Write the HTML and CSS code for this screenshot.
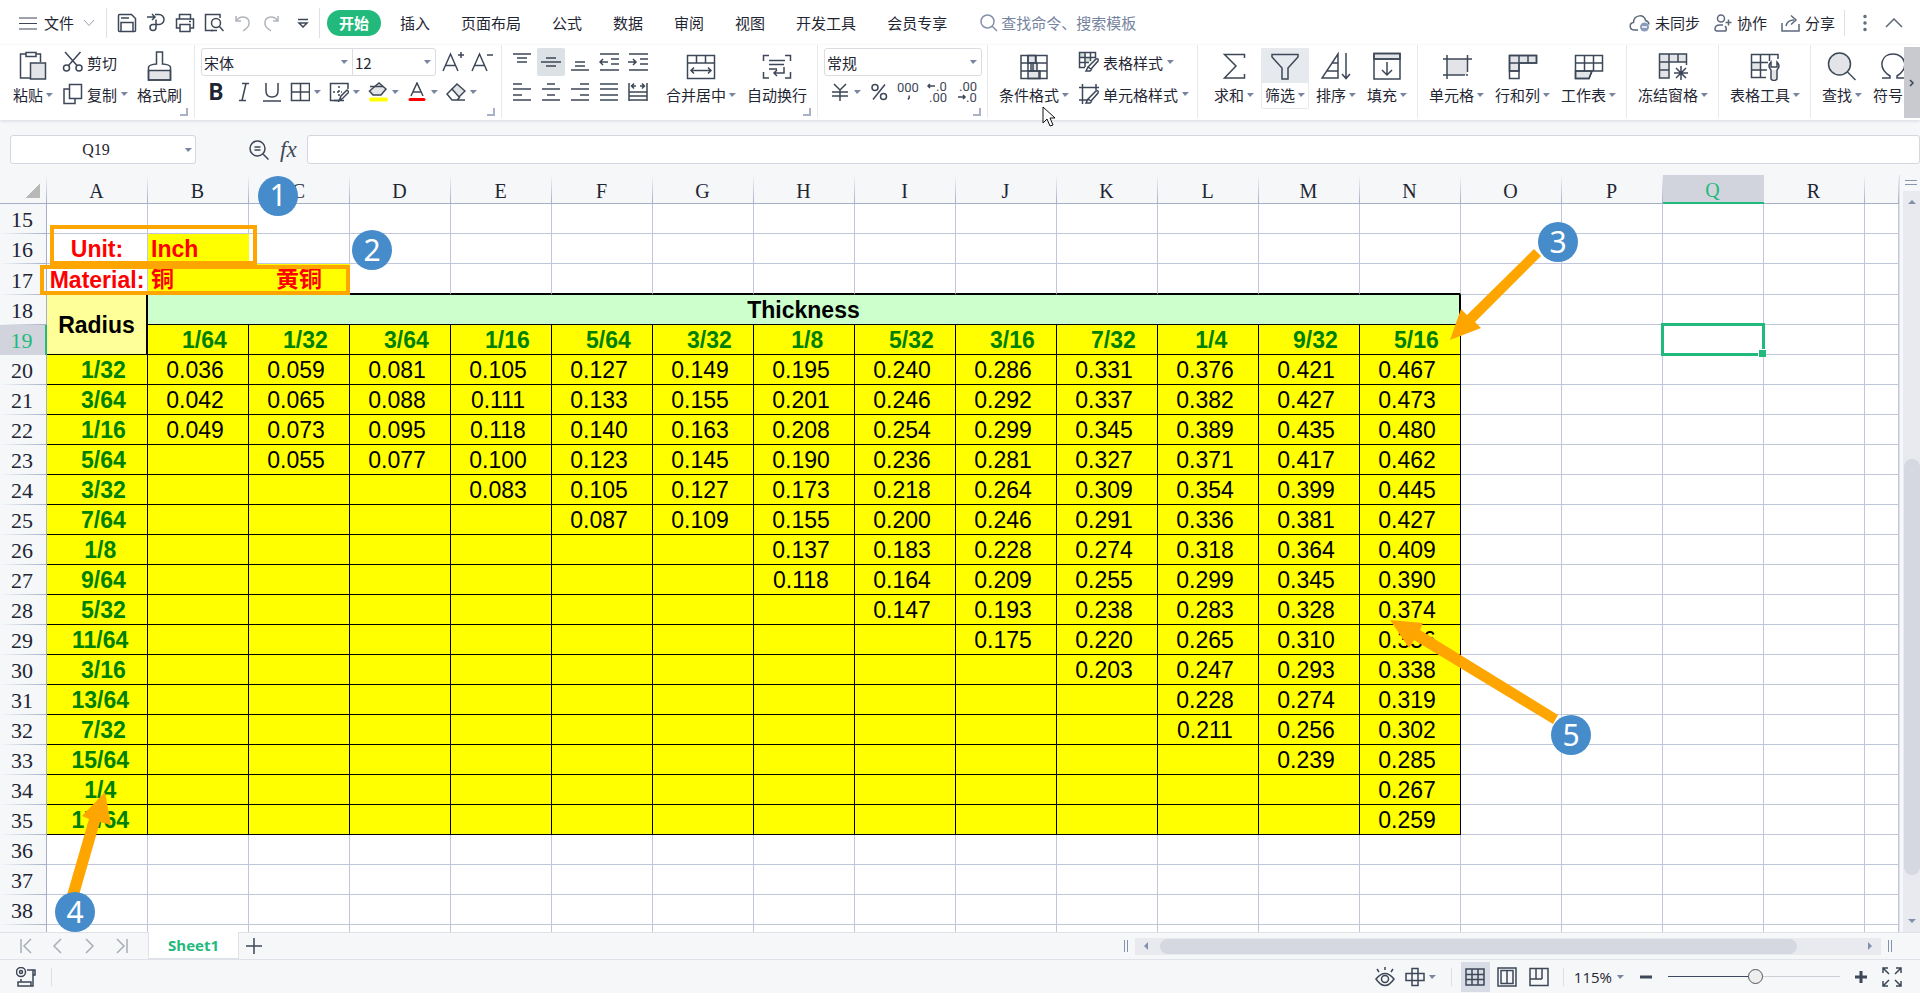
FILE: index.html
```html
<!DOCTYPE html>
<html lang="zh-CN">
<head>
<meta charset="utf-8">
<title>Sheet1</title>
<link rel="stylesheet" href="styles.css">
</head>
<body>
<div class="app">
  <header class="menubar">
    <button class="file-menu">
      <svg width="18" height="14" viewBox="0 0 18 14"><path d="M0 2h18M0 7.500h18M0 13h18"/></svg>
      <span>文件</span>
      <svg class="muted" width="12" height="8" viewBox="0 0 12 8"><path d="M1 1l5 5.500L11 1"/></svg>
    </button>
    <div class="quick">
      <button aria-label="保存"><svg width="20" height="20" viewBox="0 0 20 20"><path d="M1.500 2.500q0-1 1-1h12l4 4v12q0 1-1 1h-15q-1 0-1-1zM4 18V9.500h12V18M4 5h8"/></svg></button>
      <button aria-label="输出"><svg width="20" height="20" viewBox="0 0 20 20"><path d="M1 4h8M6 1l3 3-3 3M9 1.500h4a5 5 0 0 1 0 10H7a3 3 0 1 0 3 3v-8"/></svg></button>
      <button aria-label="打印"><svg width="20" height="20" viewBox="0 0 20 20"><path d="M4.500 6V1.500h11V6M5 15H1.500V6h17v9H15M5 11.500h10v7H5zM14 8.500h2"/></svg></button>
      <button aria-label="打印预览"><svg width="20" height="20" viewBox="0 0 20 20"><path d="M16 5V1.500H1.500v16H9"/><circle cx="12" cy="10" r="4.500"/><path d="M15.500 13.500l4 4.500M7 17.500h6"/></svg></button>
      <button class="off" aria-label="撤销"><svg width="20" height="20" viewBox="0 0 20 20"><path d="M3 3v5h5M3 8C8 1 17 4 16 11c0 3-3 5-6 7"/></svg></button>
      <button class="off" aria-label="恢复"><svg width="20" height="20" viewBox="0 0 20 20"><path d="M16 3v5h-5M16 8C11 1 2 4 3 11c0 3 3 5 6 7"/></svg></button>
      <button class="more" aria-label="更多"><svg width="12" height="10" viewBox="0 0 12 10"><path d="M1 1.500h10M2 5l4 4 4-4z"/></svg></button>
    </div>
    <nav class="tabs">
      <button class="on">开始</button>
      <button>插入</button><button>页面布局</button><button>公式</button><button>数据</button><button>审阅</button><button>视图</button><button>开发工具</button><button>会员专享</button>
    </nav>
    <label class="search">
      <svg width="18" height="18" viewBox="0 0 18 18"><circle cx="7.500" cy="7.500" r="6.500"/><path d="M12 12l5 5"/></svg>
      <input type="text" placeholder="查找命令、搜索模板">
    </label>
    <div class="account">
      <button><svg width="21" height="18" viewBox="0 0 21 18"><path d="M9 16H5C0 15.500 0 9 4.500 8.500 5 0 16 0 16.500 6.500q3 .5 3.500 4"/><circle class="badge" cx="15.500" cy="13" r="4.500"/><path class="white" d="M13 13h5"/></svg>未同步</button>
      <button><svg width="18" height="18" viewBox="0 0 18 18"><circle cx="7" cy="4.500" r="3.500"/><path d="M12 17H3q-2 0-2-2 0-4 5-4h3M14.500 5.500v6M11.500 8.500h6M11 12q2 2 1 5"/></svg>协作</button>
      <button><svg width="19" height="18" viewBox="0 0 19 18"><path d="M1 9v8h17v-7M5 12c1-5 4-6 8-6M10 1.500l5 4.500-5 4.500"/></svg>分享</button>
      <button class="dots" aria-label="更多选项"><svg width="4" height="18" viewBox="0 0 4 18"><circle cx="2" cy="2.500" r="1"/><circle cx="2" cy="9" r="1"/><circle cx="2" cy="15.500" r="1"/></svg></button>
      <button aria-label="折叠功能区"><svg width="18" height="10" viewBox="0 0 18 10"><path d="M1 9l8-8 8 8"/></svg></button>
    </div>
  </header>

  <div class="ribbon">
    <div class="groups">
      <section class="group g-clip launcher">
        <button class="tool"><svg width="30" height="30" viewBox="0 0 30 30"><path d="M12 27H2.500V3H8M18 3h4.500v8M8 1.500h10v4H8z"/><path class="fill" d="M12.500 12h15v16h-15z"/></svg><span>粘贴<i></i></span></button>
        <div class="stack">
          <button><svg width="22" height="22" viewBox="0 0 22 22"><circle cx="4.500" cy="17" r="3"/><circle cx="17" cy="17" r="3"/><path d="M3 1l12 13.500M18.500 1L6.500 14.500"/></svg><span>剪切</span></button>
          <button><svg width="22" height="22" viewBox="0 0 22 22"><path d="M7 6H2v14.500h11V16M7.500 1.500h12v14h-12z"/></svg><span>复制<i></i></span></button>
        </div>
        <button class="tool"><svg width="30" height="30" viewBox="0 0 30 30"><path class="fill" d="M3.500 19.500h22V29h-22z"/><path d="M3.500 29V16q1-2.500 8-3V1h6v12q7 .5 8 3v13z"/></svg><span>格式刷</span></button>
      </section>

      <section class="group g-font launcher">
        <div class="line">
          <div class="combo"><label class="pick font"><select aria-label="字体"><option>宋体</option></select></label><label class="pick size"><select aria-label="字号"><option>12</option></select></label></div>
          <button class="ic wide" aria-label="增大字号"><svg width="24" height="24" viewBox="0 0 24 24"><path d="M2 21L9.500 4 17 21M4.500 15.500h10M17 5h6M20 2v6"/></svg></button>
          <button class="ic wide" aria-label="减小字号"><svg width="24" height="24" viewBox="0 0 24 24"><path d="M2 21L9.500 4 17 21M4.500 15.500h10M17 5h6"/></svg></button>
        </div>
        <div class="line marks">
          <button class="ic bold">B</button>
          <button class="ic" aria-label="倾斜"><svg width="20" height="20" viewBox="0 0 20 20"><path d="M8 1.500h7M5 18.500h7M12 1.500L8 18.500"/></svg></button>
          <button class="ic" aria-label="下划线"><svg width="20" height="20" viewBox="0 0 20 20"><path d="M4 1v8q0 6 6 6t6-6V1M1 19h18"/></svg></button>
          <button class="split" aria-label="边框"><svg width="20" height="20" viewBox="0 0 20 20"><path d="M1.500 1.500h18v17h-18zM10.500 1.500v17M1.500 10h18"/></svg><i></i></button>
          <button class="split" aria-label="绘制边框"><svg width="20" height="20" viewBox="0 0 20 20"><path d="M19 7V1.500H1.500v17H10"/><path stroke-dasharray="2 2" d="M10 4v10M4 10h9"/><path d="M10 19l2-5 6-6 2 2-6 6zM5 18.500h10"/></svg><i></i></button>
          <button class="split" aria-label="填充颜色"><svg width="20" height="20" viewBox="0 0 20 20"><path class="fill" d="M5 6l6-5 7 6-5 6H5L1.500 9z"/><path d="M2 4.500h13"/><path class="yellow" d="M3 17.500h15"/></svg><i></i></button>
          <button class="split" aria-label="字体颜色"><svg width="20" height="20" viewBox="0 0 20 20"><path d="M4 14l6-13 6 13M6 10h8"/><path class="red" d="M3 17.500h14"/></svg><i></i></button>
          <button class="split" aria-label="清除"><svg width="20" height="20" viewBox="0 0 20 20"><path class="fill" d="M6 7l5-5 8 7-6 6z"/><path d="M6 7l-5 5 5 6h5l3-3M11 18h8"/></svg><i></i></button>
        </div>
      </section>

      <section class="group g-align launcher">
        <div class="aligns">
          <button aria-label="顶端对齐"><svg width="20" height="20" viewBox="0 0 20 20"><path d="M1 2h18M5 6h10M5 10h10"/></svg></button>
          <button class="on" aria-label="垂直居中"><svg width="20" height="20" viewBox="0 0 20 20"><path d="M5 6h10M0 10h20M5 14h10"/></svg></button>
          <button aria-label="底端对齐"><svg width="20" height="20" viewBox="0 0 20 20"><path d="M5 10h10M5 14h10M1 18h18"/></svg></button>
          <button aria-label="减少缩进"><svg width="20" height="20" viewBox="0 0 20 20"><path d="M1 2h19M12 7h8M12 12h8M1 18h19M9 10H1M4 7l-3 3 3 3"/></svg></button>
          <button aria-label="增加缩进"><svg width="20" height="20" viewBox="0 0 20 20"><path d="M1 2h19M12 7h8M12 12h8M1 18h19M0 10h8M5 7l3 3-3 3"/></svg></button>
          <button aria-label="左对齐"><svg width="20" height="20" viewBox="0 0 20 20"><path d="M1 2h9M1 7h18M1 13h9M1 18h18"/></svg></button>
          <button aria-label="居中"><svg width="20" height="20" viewBox="0 0 20 20"><path d="M6 2h8M1 7h18M6 13h8M1 18h18"/></svg></button>
          <button aria-label="右对齐"><svg width="20" height="20" viewBox="0 0 20 20"><path d="M10 2h9M1 7h18M10 13h9M1 18h18"/></svg></button>
          <button aria-label="两端对齐"><svg width="20" height="20" viewBox="0 0 20 20"><path d="M1 2h18M1 7h18M1 13h18M1 18h18"/></svg></button>
          <button aria-label="分散对齐"><svg width="20" height="20" viewBox="0 0 20 20"><path d="M1 1v18M19 1v18M1 10h18M1 14h18M1 18h18M4 4h4M12 4h4M6 1.500L3.500 4 6 6.500M14 1.500L16.500 4 14 6.500"/></svg></button>
        </div>
        <button class="tool"><svg width="30" height="30" viewBox="0 0 30 30"><path d="M1.500 4.500h27v23h-27zM1.500 12h27M10.500 4.500V12M19.500 4.500V12M5 19.500h20M8 16.500l-3 3 3 3M22 16.500l3 3-3 3"/></svg><span>合并居中<i></i></span></button>
        <button class="tool"><svg width="30" height="30" viewBox="0 0 30 30"><path d="M1.500 10V4.500H7M23 4.500h5.500V10M1.500 21v6H7M23 27h5.500v-6M7 9.500h16M7 13.500h15M7 18h8M22 16v6H12M15 19l-3 3 3 3"/></svg><span>自动换行</span></button>
      </section>

      <section class="group g-num launcher">
        <div class="line"><div class="combo"><label class="pick format"><select aria-label="数字格式"><option>常规</option></select></label></div></div>
        <div class="line nums">
          <button class="split" aria-label="货币"><svg width="20" height="20" viewBox="0 0 20 20"><path d="M4 2l6 6 6-6M2 10h16M2 14h16M10 8v11"/></svg><i></i></button>
          <button class="ic" aria-label="百分比"><svg width="20" height="20" viewBox="0 0 20 20"><circle cx="6" cy="5.500" r="3"/><circle cx="14.500" cy="14.500" r="3"/><path d="M16 2.500L4 17.500"/></svg></button>
          <button class="ic" aria-label="千位分隔"><svg class="digits" width="22" height="26" viewBox="0 0 22 26"><text x="0" y="13">000</text><path d="M12 16.500q1 2-1 4"/></svg></button>
          <button class="ic" aria-label="增加小数位"><svg class="digits" width="22" height="26" viewBox="0 0 22 26"><text x="9" y="12">.0</text><text x="2" y="23">.00</text><path d="M8 7H1M3 5L1 7l2 2"/></svg></button>
          <button class="ic" aria-label="减少小数位"><svg class="digits" width="22" height="26" viewBox="0 0 22 26"><text x="2" y="12">.00</text><text x="9" y="23">.0</text><path d="M1 18h7M6 16l2 2-2 2"/></svg></button>
        </div>
      </section>

      <section class="group g-style">
        <button class="tool"><svg width="30" height="30" viewBox="0 0 30 30"><path class="fill" d="M9 4.500h7.500V12H9zM12 12h6v8h-6zM9 20h12v7.500H9z"/><path d="M2 4.500h26v23H2zM2 12h26M2 20h26M9 4.500V20M17 4.500V12M14 12v8M20 20v7.500"/></svg><span>条件格式<i></i></span></button>
        <div class="stack">
          <button><svg width="22" height="22" viewBox="0 0 22 22"><path class="green" d="M2 2h6v5H2zM8 7h5v4H8z"/><path d="M17.500 7V1.500h-16v15H7M1.500 6.500h16M1.500 11.500H11M7 1.500V16M12.500 1.500V10M10 16l8-8q3-1 2 2l-7 8zM10 16l-2 4h4l2-2"/></svg><span>表格样式<i></i></span></button>
          <button><svg width="22" height="22" viewBox="0 0 22 22"><path d="M1 4.500h20M4.500 1v20M1 17h8M18 1v6M10 16l8-8q3-1 2 2l-7 8zM10 16l-2 4h4l2-2"/></svg><span>单元格样式<i></i></span></button>
        </div>
      </section>

      <section class="group g-edit">
        <button class="tool"><svg width="30" height="30" viewBox="0 0 30 30"><path d="M25.500 7V3.500h-20L17 15 5.500 27h20v-4"/></svg><span>求和<i></i></span></button>
        <button class="tool on"><svg width="30" height="30" viewBox="0 0 30 30"><path d="M2 3.500h26V6L18 17v11h-6V17L2 6z"/></svg><span>筛选<i></i></span></button>
        <button class="tool"><svg width="30" height="30" viewBox="0 0 30 30"><path d="M17 3L1 27h16zM11 12h6M6 20h11M25 2v25M21 23l4 4.500 4-4.500"/></svg><span>排序<i></i></span></button>
        <button class="tool"><svg width="30" height="30" viewBox="0 0 30 30"><path class="fill" d="M2 2.500h26V8H2z"/><path d="M2 2.500h26V28H2zM2 8h26M15 11v13M10 19l5 5 5-5"/></svg><span>填充<i></i></span></button>
      </section>

      <section class="group g-cells">
        <button class="tool"><svg width="30" height="30" viewBox="0 0 30 30"><path class="fill" stroke="none" d="M5 8h20v16H5z"/><path d="M1 8h29M5 4v24M25.500 4v17M1 24h22M25 23v2"/></svg><span>单元格<i></i></span></button>
        <button class="tool"><svg width="30" height="30" viewBox="0 0 30 30"><path class="fill" d="M1.500 4.500h27V12H11v8H1.500z"/><path d="M1.500 4.500h27V12H11v15.500H1.500zM11 4.500V12M20 4.500V12M1.500 12H11M1.500 20H11"/></svg><span>行和列<i></i></span></button>
        <button class="tool"><svg width="30" height="30" viewBox="0 0 30 30"><path class="fill" d="M1.500 20H18l-3 7.500H1.500z"/><path d="M1.500 4.500h27V20H1.500zM1.500 12h27M10.500 4.500V20M19.500 4.500V20M1.500 20v7.500H15l3-7.500"/></svg><span>工作表<i></i></span></button>
      </section>

      <section class="group g-one">
        <button class="tool"><svg width="30" height="30" viewBox="0 0 30 30"><path class="fill" stroke="none" d="M1.500 3h27v8H11v16H1.500z"/><path d="M28.500 14V3h-27v24H11V3M1.500 11h27M1.500 19H11M20 3v8M23 15v14M16 22h14M18 17l10 10M28 17L18 27"/></svg><span>冻结窗格<i></i></span></button>
      </section>
      <section class="group g-one">
        <button class="tool"><svg width="30" height="30" viewBox="0 0 30 30"><path class="fill" stroke="none" d="M1.500 12H11v8H1.500zM22 19h5v9h-5z"/><path d="M28 8V3.500H1.500v23H16M1.500 11.500H18M1.500 19H17M10.500 3.500v23M19.500 3.500V10M21 11q-4 4 0 8v9q3 3 6 0v-9q4-4 0-8v5h-6z"/></svg><span>表格工具<i></i></span></button>
      </section>
      <section class="group g-last">
        <button class="tool"><svg width="30" height="30" viewBox="0 0 30 30"><circle class="fill" cx="12.500" cy="13" r="11"/><path d="M20.500 21l8 8"/></svg><span>查找<i></i></span></button>
        <button class="tool"><svg width="30" height="30" viewBox="0 0 30 30"><path d="M4 27h8v-2C-1 17 3 3 15 3s17 14 4 22v2h8"/></svg><span>符号<i></i></span></button>
      </section>
    </div>
    <button class="next" aria-label="向右滚动"><svg width="6" height="8" viewBox="0 0 6 8"><path d="M1 1l3 3-3 3"/></svg></button>
    <svg class="pointer" width="14" height="22" viewBox="0 0 14 22"><path d="M1 1v16l4-4 3 7 3-1-3-7h5z"/></svg>
  </div>

  <div class="formula">
    <label class="namebox"><input type="text" value="Q19" aria-label="名称框"></label>
    <div class="fx">
      <svg width="20" height="20" viewBox="0 0 20 20"><circle cx="8.500" cy="8.500" r="7.500"/><path d="M14 14l5.500 5.500M5.500 7h6M5.500 10h6"/></svg>
      <em>fx</em>
    </div>
    <input class="entry" type="text" aria-label="编辑栏">
  </div>

  <main class="sheet">
    <div class="view">
      <table class="grid">
        <colgroup id="cols"></colgroup>
        <thead id="head"></thead>
        <tbody id="body"></tbody>
      </table>
    </div>
    <div class="vbar"><div class="handle"></div><div class="track"><i class="up"></i><div class="thumb"></div><i class="down"></i></div></div>
    <div class="selection"></div>
    <svg class="notes">
      <path class="frame" d="M52 52h203v36H52zM42 92h306v26H42z"/>
      <path class="arrow" d="M1450 165l11-31 6 6 67-66 7 7-66 66 6 6z"/>
      <path class="arrow" d="M105 617l6 33-11-3-21 73H67l22-76-7-3z"/>
      <path class="arrow" d="M1390 445l33 3-3 7 138 85-5 9-139-84-5 8z"/>
      <g class="pin"><circle cx="278" cy="21" r="20"/><circle cx="372" cy="75" r="20"/><circle cx="1558" cy="67" r="20"/><circle cx="75" cy="737" r="20"/><circle cx="1571" cy="560" r="20"/></g>
      <g class="num"><text x="278" y="31">1</text><text x="372" y="86">2</text><text x="1558" y="78">3</text><text x="75" y="748">4</text><text x="1571" y="571">5</text></g>
    </svg>
  </main>

  <div class="sheetbar">
    <div class="moves">
      <button aria-label="第一张"><svg width="12" height="16" viewBox="0 0 12 16"><path d="M1 1v14M11 1L4 8l7 7"/></svg></button>
      <button aria-label="上一张"><svg width="12" height="16" viewBox="0 0 12 16"><path d="M9 1L2 8l7 7"/></svg></button>
      <button aria-label="下一张"><svg width="12" height="16" viewBox="0 0 12 16"><path d="M2 1l7 7-7 7"/></svg></button>
      <button aria-label="最后一张"><svg width="12" height="16" viewBox="0 0 12 16"><path d="M11 1v14M1 1l7 7-7 7"/></svg></button>
    </div>
    <button class="sheet-tab">Sheet1</button>
    <button class="add" aria-label="新建工作表"><svg width="16" height="16" viewBox="0 0 16 16"><path d="M8 0v16M0 8h16"/></svg></button>
    <div class="hscroll">
      <span class="grip"></span>
      <div class="htrack"><i class="left"></i><div class="hthumb"></div><i class="right"></i></div>
      <span class="grip"></span>
    </div>
  </div>

  <footer class="status">
    <button class="rec" aria-label="录制"><svg width="20" height="20" viewBox="0 0 20 20"><circle cx="5" cy="5" r="4.500"/><circle cx="5" cy="5" r="1.500"/><path d="M11 3h8v5h-2M17 3v16h-2M5 12v3M2 15h13v4H2z"/></svg></button>
    <div class="right-tools">
      <button aria-label="护眼"><svg width="20" height="20" viewBox="0 0 20 20"><path d="M1 12q9-11 18 0-9 13-18 0zM10 0v3M2 2l2 3M18 2l-2 3"/><circle cx="10" cy="12" r="3.500"/></svg></button>
      <button class="split" aria-label="阅读模式"><svg width="20" height="20" viewBox="0 0 20 20"><path d="M7 1.500h6v17H7zM1 6.500h18v7H1z"/></svg><i></i></button>
      <div class="modes">
        <button class="on" aria-label="普通视图"><svg width="20" height="20" viewBox="0 0 20 20"><path d="M1 2h18v16H1zM1 7.500h18M1 12.500h18M7 2v16M13 2v16"/></svg></button>
        <button aria-label="页面布局"><svg width="20" height="20" viewBox="0 0 20 20"><path d="M1 1h18v18H1zM4 3.500h12v13H4zM10 3.500v13"/></svg></button>
        <button aria-label="分页预览"><svg width="20" height="20" viewBox="0 0 20 20"><path d="M1 1.500h18v17H1zM13 1.500V12M1 12h12M7 1.500V12"/></svg></button>
      </div>
      <button class="zoom">115%<i></i></button>
      <button class="heavy" aria-label="缩小"><svg width="14" height="14" viewBox="0 0 14 14"><path d="M1 7h12"/></svg></button>
      <input class="slider" type="range" min="0" max="100" value="51" aria-label="缩放">
      <button class="heavy" aria-label="放大"><svg width="14" height="14" viewBox="0 0 14 14"><path d="M1 7h12M7 1v12"/></svg></button>
      <button class="full" aria-label="全屏"><svg width="20" height="20" viewBox="0 0 20 20"><path d="M1 6V1h5M14 1h5v5M19 14v5h-5M6 19H1v-5M1 1l6 6M19 1l-6 6M19 19l-6-6M1 19l6-6"/></svg></button>
    </div>
  </footer>
</div>
<script src="grid.js"></script>
</body>
</html>
```
FILE: styles.css
```css
* { box-sizing: border-box; }

body {
  margin: 0;
  font-family: "Noto Sans CJK SC", sans-serif;
  font-size: 15px;
  color: #1f2633;
}

button {
  display: flex;
  align-items: center;
  justify-content: center;
  padding: 0;
  border: 0;
  background: none;
  font: inherit;
  color: inherit;
  white-space: nowrap;
}

input, select { font: inherit; color: inherit; outline: 0; }

svg {
  flex: none;
  fill: none;
  stroke: #3d4757;
  stroke-width: 1.5;
}

svg .fill { fill: #e2e4e8; }
svg .green { fill: #cfe3d6; stroke: none; }
svg .yellow { stroke: #ff0; stroke-width: 4; stroke-linecap: round; }
svg .red { stroke: #f00; stroke-width: 3; stroke-linecap: round; }

/* drop-down marks */
.tool i, .stack i, .split i, .zoom i, .pick::after, .namebox::after {
  content: "";
  flex: none;
  display: inline-block;
  border: 4px solid transparent;
  border-top-color: #7885a0;
  border-bottom: 0;
  border-left-width: 3px;
}

.app {
  display: flex;
  flex-direction: column;
  height: 100vh;
  min-height: 600px;
  background: #f5f7f9;
  overflow: hidden;
}

/* menu bar */
.menubar {
  display: flex;
  align-items: center;
  height: 45px;
  flex: none;
  padding: 0 17px 0 19px;
  background: #fff;
}

.file-menu {
  gap: 7px;
  height: 30px;
  padding-right: 11px;
  border-right: 1px solid #dcdfe4;
}
.file-menu .muted { stroke: #9aa1ad; margin-left: 2px; }
.file-menu svg { stroke-width: 1; }

.quick {
  display: flex;
  align-items: center;
  gap: 9px;
  height: 30px;
  padding: 0 10px;
  border-right: 1px solid #dcdfe4;
}
.quick .off { opacity: .4; }
.quick .more { margin-left: 6px; }

.tabs { display: flex; align-items: center; gap: 31px; margin-left: 7px; }
.tabs .on {
  width: 54px;
  height: 26px;
  margin-right: -12px;
  border-radius: 13px;
  background: #21ba7c;
  color: #fff;
  font-weight: bold;
}

.search { display: flex; align-items: center; gap: 3px; margin-left: 33px; flex: 1; }
.search svg { stroke: #8591ac; }
.search input { width: 160px; padding: 0; border: 0; background: none; }
.search input::placeholder { color: #7683a0; opacity: 1; }

.account { display: flex; align-items: center; gap: 14px; }
.account button { gap: 5px; }
.account svg { stroke: #5d687c; }
.account .badge { fill: #8c9bbb; stroke: none; }
.account .white { stroke: #fff; }
.account .dots { height: 26px; width: 31px; border-left: 1px solid #dcdfe4; margin: 0 -4px 0 -5px; padding-left: 10px; }

/* ribbon */
.ribbon {
  position: relative;
  z-index: 2;
  display: flex;
  height: 75px;
  flex: none;
  background: #fff;
  box-shadow: 0 1px 3px #d5d8dd;
}
.groups { display: flex; flex: 1; min-width: 0; overflow: hidden; }
.group {
  position: relative;
  display: flex;
  flex: none;
  align-items: flex-start;
  gap: 3px;
  height: 73px;
  padding-top: 3px;
  border-right: 1px solid #e6e8eb;
}
.launcher::after {
  content: "";
  position: absolute;
  right: 6px;
  bottom: 2px;
  width: 6px;
  height: 6px;
  border: solid #a8b1c5;
  border-width: 0 2px 2px 0;
}
.g-clip { width: 195px; padding-left: 9px; gap: 5px; }
.g-font { width: 307px; padding-left: 6px; flex-direction: column; gap: 2px; }
.g-align { width: 316px; padding-left: 6px; }
.g-num { width: 170px; padding-left: 6px; flex-direction: column; gap: 2px; }
.g-style { width: 210px; padding-left: 7px; gap: 5px; }
.g-edit { width: 220px; padding-left: 12px; }
.g-cells { width: 209px; padding-left: 7px; }
.g-one { width: 92px; padding-left: 7px; }
.g-last { padding-left: 7px; border: 0; }

.tool { flex: none; flex-direction: column; height: 61px; padding: 0 4px; }
.tool span { display: flex; align-items: center; gap: 3px; margin-top: 3px; line-height: 22px; }
.tool.on {
  background: linear-gradient(#e6eaef 35px, #fff 35px);
  box-shadow: inset 0 0 0 1px #e6eaef;
  border-radius: 2px;
}

.stack { display: flex; flex-direction: column; align-items: flex-start; gap: 4px; }
.stack button { gap: 3px; height: 28px; }
.stack span { display: flex; align-items: center; gap: 4px; }

.line { display: flex; align-items: center; height: 28px; }
.combo { display: flex; border: 1px solid #d9dce1; border-radius: 3px; }
.pick { position: relative; display: flex; }
.pick::after { position: absolute; right: 4px; top: 11px; }
.pick select {
  width: 100%;
  height: 26px;
  padding: 0 2px;
  border: 0;
  background: none;
  appearance: none;
}
.font { width: 150px; }
.size { width: 83px; border-left: 1px solid #d9dce1; }
.format { width: 156px; }
.ic { width: 20px; height: 28px; }
.wide { width: 24px; margin-left: 5px; }
.split { gap: 4px; }
.marks { gap: 8px; padding-left: 5px; }
.bold { font: bold 23px Roboto, sans-serif; }
.nums { gap: 8px; padding-left: 6px; }
.nums .ic { width: auto; }
.digits text { font: 13px Roboto, sans-serif; fill: #3d4757; stroke: none; }

.aligns { display: grid; grid-template-columns: repeat(5, 28px); grid-auto-rows: 28px; gap: 2px 1px; margin-right: 7px; }
.aligns .on { background: #dce1e5; border-radius: 2px; }

.next { width: 16px; height: 71px; margin-top: 2px; background: #c8cacf; flex: none; }
.pointer { position: absolute; left: 1042px; top: 61px; stroke: #111; stroke-width: 1; fill: #fff; }

/* formula bar */
.formula { display: flex; align-items: center; flex: none; height: 55px; padding: 4px 0 0 10px; }
.namebox { position: relative; display: flex; width: 186px; }
.namebox::after { position: absolute; right: 4px; top: 13px; }
.namebox input {
  width: 100%;
  height: 29px;
  padding-right: 16px;
  border: 1px solid #d4d7dd;
  border-radius: 3px;
  background: #fff;
  text-align: center;
  font: 16px "Liberation Serif", serif;
}
.fx { display: flex; align-items: center; gap: 11px; margin-left: 53px; width: 58px; }
.fx em { font: italic 23px "Liberation Serif", serif; color: #3d4757; }
.entry { flex: 1; min-width: 0; height: 29px; border: 1px solid #d4d7dd; border-radius: 3px; background: #fff; }

/* worksheet */
.sheet { position: relative; display: flex; flex: 1; min-height: 0; }
.view { flex: 1; min-width: 0; overflow: hidden; border-right: 1px solid #dfe2e9; background: #fff; }

.grid { width: 100%; table-layout: fixed; border-collapse: separate; border-spacing: 0; }
.grid .c-head { width: 47px; }
.grid .c-col { width: 101px; }
.grid tr { height: 30px; }
.grid thead tr { height: 29px; }
.grid .tall { height: 31px; }
.grid th, .grid td { padding: 1px 0 0; line-height: 26px; white-space: pre; text-align: center; }
.grid td { border: solid #c0c7da; border-width: 0 1px 1px 0; font-family: "Liberation Sans", "Noto Sans CJK SC", sans-serif; font-size: 23px; color: #000; }
.grid thead th {
  padding: 3px 2px 0 0;
  border-bottom: 1px solid #a6afc8;
  background: linear-gradient(#f5f7f9, #a6afc8) right / 1px 100% no-repeat #f5f7f9;
  font: 20px/24px "Liberation Serif", serif;
}
.grid tbody th {
  border-right: 1px solid #a6afc8;
  background: linear-gradient(to right, #f5f7f9, #a6afc8) bottom / 100% 1px no-repeat #f5f7f9;
  padding: 2px 2px 0 0;
  font: 22px/26px "Liberation Serif", serif;
}
.grid thead .sel { background: #d1d4dc; border-bottom: 2px solid #21ba7c; color: #21ba7c; }
.grid tbody .sel { background: #d1d4dc; border-right: 2px solid #21ba7c; color: #21ba7c; }
.corner::after {
  content: "";
  display: block;
  width: 15px;
  height: 15px;
  margin-left: 25px;
  background: linear-gradient(135deg, transparent 50%, #b8b8b8 50%);
}
.grid .fill { background: #ff0; border-color: #000; }
.grid .num { padding-right: 6px; }
.grid .frac { font-weight: bold; color: #008000; }
.grid .red { font-weight: bold; color: #f00; }
.grid .left { text-align: left; padding-left: 3px; }
.grid .lemon { background: #ff0; border-color: #ff0; }
.grid .under { border-bottom: 2px solid #000; }
.grid .radius { background: #ff9; font-weight: bold; border-color: #000; border-right-width: 2px; }
.grid .thick { background: #cfc; font-weight: bold; border-color: #000; border-right-width: 2px; }

.vbar { display: flex; flex-direction: column; width: 20px; padding-left: 3px; flex: none; }
.handle { height: 5px; margin: 5px 3px 6px 2px; border: solid #8a96b0; border-width: 1px 0; }
.track { display: flex; flex-direction: column; align-items: center; flex: 1; background: #e8eaef; }
.thumb { width: 16px; flex: 57; border-radius: 8px; background: #d5d8e0; }
.up { margin-top: 9px; border: 4px solid transparent; border-top: 0; border-bottom-color: #8491ad; }
.track::before { content: ""; order: 1; flex: 35; }
.up { order: 0; }
.thumb { order: 2; }
.track::after { content: ""; order: 3; flex: 6; }
.down { order: 4; margin-bottom: 9px; border: 4px solid transparent; border-bottom: 0; border-top-color: #8491ad; }

.selection { position: absolute; left: 1661px; top: 148px; width: 104px; height: 33px; border: 3px solid #21ba7c; }
.selection::after {
  content: "";
  position: absolute;
  right: -4px;
  bottom: -4px;
  width: 7px;
  height: 7px;
  border: solid #fff;
  border-width: 1px 0 0 1px;
  background: #21ba7c;
}

.notes { position: absolute; left: 0; top: 0; width: 100%; height: 100%; overflow: visible; pointer-events: none; z-index: 1; stroke: none; }
.frame { stroke: #ffa500; stroke-width: 4; }
.arrow { fill: #ffa500; }
.pin { fill: #468ccb; }
.num text { font: 30px "Noto Sans", sans-serif; fill: #fff; text-anchor: middle; }

/* sheet tabs */
.sheetbar { display: flex; align-items: stretch; flex: none; height: 28px; border-top: 1px solid #dfe2e9; border-bottom: 1px solid #dfe2e9; }
.moves { display: flex; align-items: center; gap: 20px; width: 148px; padding-left: 20px; }
.moves svg { stroke: #a9adb5; }
.sheet-tab {
  width: 91px;
  margin-top: -1px;
  border: solid #dfe2e9;
  border-width: 0 1px 1px;
  background: #fff;
  color: #21ba7c;
  font: bold 15px "Open Sans", sans-serif;
}
.add { margin-left: 7px; }
.hscroll { display: flex; align-items: center; gap: 7px; width: 42%; max-width: 796px; margin-left: auto; padding-right: 28px; }
.grip { width: 4px; height: 12px; border: solid #8491ad; border-width: 0 1px; flex: none; }
.htrack { display: flex; align-items: center; flex: 1; height: 17px; padding: 0 9px; background: #e8eaef; }
.hthumb { flex: 1; height: 15px; margin: 0 71px 0 12px; border-radius: 8px; background: #d5d8e0; }
.left, .right { border: 4px solid transparent; }
.htrack .left { border-left: 0; border-right-color: #8491ad; }
.htrack .right { border-right: 0; border-left-color: #8491ad; }

/* status bar */
.status { display: flex; align-items: center; justify-content: space-between; flex: none; height: 33px; padding: 0 18px 0 0; }
.rec { height: 18px; width: 52px; border-right: 1px solid #dcdfe4; }
.right-tools { display: flex; align-items: center; gap: 10px; }
.modes { display: flex; gap: 3px; margin-left: 5px; padding: 0 10px; background: linear-gradient(#dcdfe4, #dcdfe4) left / 1px 18px no-repeat, linear-gradient(#dcdfe4, #dcdfe4) right / 1px 18px no-repeat; }
.modes button { width: 29px; height: 30px; }
.modes .on { background: #d8dde5; }
.zoom { gap: 5px; font-family: "Open Sans", sans-serif; margin-right: 5px; }
.heavy svg { stroke-width: 3; }
.full { margin-left: 4px; }
.slider { appearance: none; width: 172px; height: 16px; margin: 0 4px 0 5px; background: linear-gradient(#3b4a61, #3b4a61) left / 50% 1px no-repeat, linear-gradient(#ccd0d6, #ccd0d6) center / 100% 1px no-repeat; }
.slider::-webkit-slider-thumb { appearance: none; width: 15px; height: 15px; border: 1px solid #555; border-radius: 50%; background: #eee; }
```
FILE: grid.js
```js
const letters = "ABCDEFGHIJKLMNOPQR".split("");
const thickness = ["1/64", "1/32", "3/64", "1/16", "5/64", "3/32", "1/8", "5/32", "3/16", "7/32", "1/4", "9/32", "5/16"];

// Each line: radius, then the values aligned to the right-hand columns.
const rows = [
  "1/32 .036 .059 .081 .105 .127 .149 .195 .240 .286 .331 .376 .421 .467",
  "3/64 .042 .065 .088 .111 .133 .155 .201 .246 .292 .337 .382 .427 .473",
  "1/16 .049 .073 .095 .118 .140 .163 .208 .254 .299 .345 .389 .435 .480",
  "5/64 .055 .077 .100 .123 .145 .190 .236 .281 .327 .371 .417 .462",
  "3/32 .083 .105 .127 .173 .218 .264 .309 .354 .399 .445",
  "7/64 .087 .109 .155 .200 .246 .291 .336 .381 .427",
  "1/8 .137 .183 .228 .274 .318 .364 .409",
  "9/64 .118 .164 .209 .255 .299 .345 .390",
  "5/32 .147 .193 .238 .283 .328 .374",
  "11/64 .175 .220 .265 .310 .356",
  "3/16 .203 .247 .293 .338",
  "13/64 .228 .274 .319",
  "7/32 .211 .256 .302",
  "15/64 .239 .285",
  "1/4 .267",
  "17/64 .259"
].map(line => line.split(" "));

// Fractions keep their slash aligned: "# ??/??"
const frac = text => {
  const [n, d] = text.split("/");
  return " " + n.padStart(2) + "/" + d.padEnd(2);
};
const td = (text = "", cls = "", extra = "") => `<td class="${cls}"${extra}>${text}</td>`;
const blanks = n => td().repeat(n);

function cells(row) {
  if (row === 16) return td("Unit:", "red") + td("Inch", "red lemon left") + blanks(17);
  if (row === 17) {
    return td("Material:", "red") + td("铜", "red lemon left under") + td("黄铜", "red lemon under") +
      td("", "under").repeat(11) + blanks(5);
  }
  if (row === 18) return td("Radius", "radius", ' rowspan="2"') + td("Thickness", "thick", ' colspan="13"') + blanks(5);
  if (row === 19) return thickness.map(t => td(frac(t), "fill frac")).join("") + blanks(5);
  const data = rows[row - 20];
  if (!data) return blanks(19);
  const values = data.slice(1);
  return td(frac(data[0]), "fill frac") +
    td("", "fill").repeat(13 - values.length) +
    values.map(v => td("0" + v, "fill num")).join("") + blanks(5);
}

document.getElementById("cols").innerHTML = '<col class="c-head">' + '<col class="c-col">'.repeat(18) + "<col>";
document.getElementById("head").innerHTML = '<tr><th class="corner"></th>' +
  letters.map(l => `<th class="${l === "Q" ? "sel" : ""}">${l}</th>`).join("") + "<th></th></tr>";

// The last row only shows its top edge, so it carries no label.
let html = "";
for (let row = 15; row <= 39; row++) {
  const label = row < 39 ? row : "";
  html += `<tr class="${row === 17 ? "tall" : ""}"><th class="${row === 19 ? "sel" : ""}">${label}</th>${cells(row)}</tr>`;
}
document.getElementById("body").innerHTML = html;
```
